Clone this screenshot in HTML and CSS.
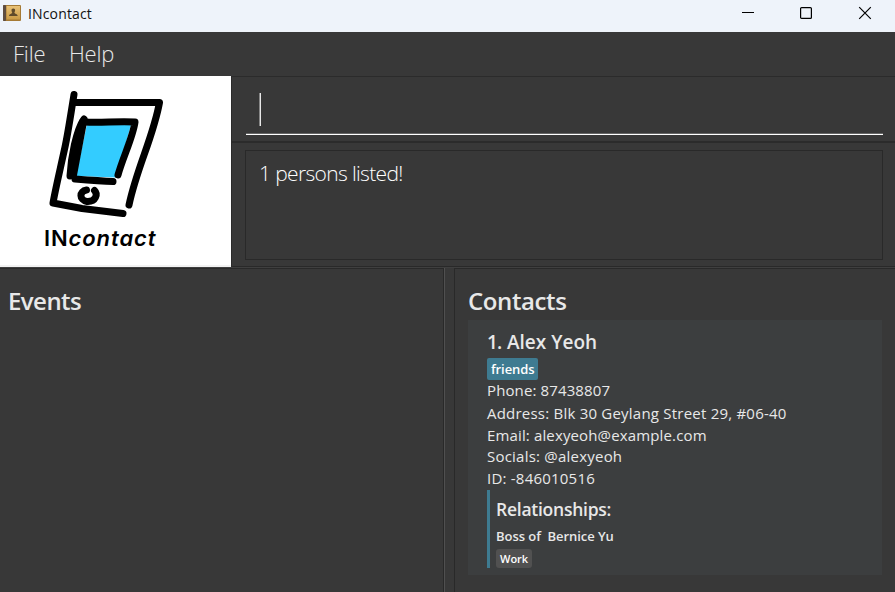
FILE: index.html
```
<!DOCTYPE html>
<html lang="en">
<head>
<meta charset="utf-8">
<title>INcontact</title>
<link rel="stylesheet" href="styles.css">
</head>
<body>
<div class="window">
  <header class="titlebar">
    <svg class="app-icon" width="20" height="18" viewBox="0 0 20 18">
      <defs><linearGradient id="book" x1="0" y1="0" x2="0" y2="1"><stop offset="0" stop-color="#e9c277"/><stop offset="1" stop-color="#c99a45"/></linearGradient></defs>
      <rect x="0" y="1" width="18" height="16" rx="1" fill="#a57a35"/>
      <rect x="3.500" y="2" width="13.500" height="13.500" fill="url(#book)"/>
      <rect x="0" y="1" width="3" height="16" rx="1" fill="#5d4c40"/>
      <path d="M10.300 4.500c1.300 0 1.900.8 1.800 2-.1 1-.6 1.500-.7 2.200 0 1 3.300 1 3.300 3.300H6c0-2.300 3.200-2.300 3.200-3.300-.1-.7-.6-1.200-.7-2.200-.1-1.200.5-2 1.800-2z" fill="#5f4a2a"/>
    </svg>
    <span class="app-title">INcontact</span>
    <div class="controls">
      <svg width="14" height="14" viewBox="0 0 14 14"><path d="M1 6.500h12" stroke="#000"/></svg>
      <svg width="14" height="14" viewBox="0 0 14 14"><rect x="1.600" y="1.600" width="10.800" height="10.800" rx="1" fill="none" stroke="#000" stroke-width="1.200"/></svg>
      <svg width="14" height="14" viewBox="0 0 14 14"><path d="M1.200 1.200l11.600 11.600M12.800 1.200L1.200 12.800" stroke="#000" stroke-width="1.200"/></svg>
    </div>
  </header>
  <nav class="menubar"><span class="m-file">File</span><span class="m-help">Help</span></nav>
  <section class="top">
    <div class="logo">
      <svg width="130" height="135" viewBox="0 0 130 135" fill="none" stroke="#000" stroke-width="7" stroke-linecap="round" stroke-linejoin="round">
        <path d="M47 39C57 42 71 37 91 40L76 92.500 36 91z" fill="#33ccff" stroke="none"/>
        <path d="M34 9.500C30 34 28 48 25 62C20 85 15 106 13 118L42 123.500L83 128.500"/>
        <path d="M35 17.500H119.500C113 53 97 82 89 120"/>
        <path d="M45 37C61 38 77 36 95 37C93 52 83 72 78 90"/>
        <path d="M44 34C36 45 31 73 30 91"/>
        <path d="M43 37L33 90" stroke-width="8"/>
        <path d="M35 94C48 95 61 96 73 96.500"/>
        <path d="M46.500 105C39 106 39 115 47 116.500C56 117 58 109 54.500 105.500" stroke-width="7"/>
      </svg>
      <div class="wordmark">IN<i>contact</i></div>
    </div>
    <div class="console">
      <div class="command"><div class="field"><span class="caret"></span></div></div>
      <div class="result-wrap"><div class="result">1 persons listed!</div></div>
    </div>
  </section>
  <main class="split">
    <section class="events"><h2 class="h-events">Events</h2></section>
    <div class="divider"></div>
    <section class="contacts">
      <h2 class="h-contacts">Contacts</h2>
      <article class="card">
        <h3 class="name"><span class="num">1.</span><span>Alex Yeoh</span></h3>
        <span class="tag">friends</span>
        <p class="r1">Phone: 87438807</p>
        <p class="r2">Address: Blk 30 Geylang Street 29, #06-40</p>
        <p class="r3">Email: alexyeoh@example.com</p>
        <p class="r4">Socials: @alexyeoh</p>
        <p class="r5">ID: -846010516</p>
        <div class="relations">
          <h4>Relationships:</h4>
          <div class="relation">Boss of&nbsp; Bernice Yu</div>
          <span class="work">Work</span>
        </div>
      </article>
    </section>
  </main>
</div>
</body>
</html>
```
FILE: styles.css
```
* { box-sizing: border-box; }
body { margin: 0; font-family: "Open Sans", "Noto Sans", sans-serif; color: #e8e8e8; }
h2, h3, h4, p { margin: 0; white-space: nowrap; }
.window { width: 895px; height: 592px; background: #383838; overflow: hidden; display: flex; flex-direction: column; }
.titlebar { height: 32px; background: #eef3fa; color: #111; display: flex; align-items: flex-start; padding-left: 3px; flex: none; }
.app-icon { margin-top: 4px; width: 20px; }
.app-title { font-size: 14px; line-height: 20px; margin: 4px 0 0 5px; letter-spacing: .15px; }
.controls { margin: 6px 23px 0 auto; display: flex; gap: 45px; }
.controls svg { display: block; }
.controls svg:first-child { margin-right: -1px; }
.menubar { height: 44px; display: flex; gap: 23px; padding-left: 13px; line-height: 42px; font-size: 22px; font-weight: 300; letter-spacing: -.2px; flex: none; }
.m-file { width: 33px; }
.top { height: 191px; display: flex; flex: none; }
.logo { width: 231px; background: #fff; border-bottom: 2px solid #f2f2f2; padding: 9px 0 0 40px; color: #000; }
.logo svg { display: block; }
.wordmark { font: 600 22px/28px Inter, "Liberation Sans", sans-serif; letter-spacing: .9px; margin: 4px 0 0 4px; white-space: nowrap; }
.console { flex: 1; display: flex; flex-direction: column; border-left: 1px solid #2b2b2b; }
.command { height: 68px; border-top: 1px solid #2b2b2b; border-bottom: 2px solid #2b2b2b; padding: 16px 12px 0 14px; }
.field { height: 42px; border-bottom: 1px solid #fff; box-shadow: inset 0 -1px #666; padding-left: 13px; }
.caret { display: block; width: 2px; height: 33px; background: #e8e8e8; border-left: 1px solid #888; }
.result-wrap { flex: 1; padding: 7px 12px 6px 13px; border-bottom: 1px solid #292929; }
.result { height: 110px; border: 1px solid #292929; padding: 7px 0 0 13px; font-size: 21px; line-height: 30px; font-weight: 300; letter-spacing: -.65px; color: #fff; }
.split { flex: 1; display: flex; border-top: 1px solid #3f3f3f; }
.events { width: 444px; border-top: 1px solid #292929; border-right: 1px solid #292929; padding: 15px 0 0 8px; }
.divider { width: 10px; border-left: 1px solid #505050; }
.contacts { flex: 1; border-top: 1px solid #292929; border-left: 1px solid #292929; padding: 15px 13px 0 13px; }
h2 { font-size: 24px; line-height: 34px; font-weight: 600; letter-spacing: -.4px; }
.h-events { letter-spacing: -.55px; }
.card { height: 255px; margin-top: 2px; background: #3c3e3f; padding: 7px 0 0 19px; }
.name { font-size: 19px; line-height: 30px; font-weight: 600; display: flex; }
.num { width: 20px; letter-spacing: -.8px; }
.tag { display: block; width: 51px; height: 22px; border-radius: 2px; background: #3e7b91; color: #fff; font-size: 13px; line-height: 22px; font-weight: 600; letter-spacing: -.1px; padding-left: 4px; margin-top: 1px; }
.card p { font-size: 15px; line-height: 22px; height: 22px; letter-spacing: .22px; }
.card .r1 { line-height: 20px; letter-spacing: .12px; }
.card .r3 { letter-spacing: .14px; }
.card .r4, .card .r5 { line-height: 20px; }
.relations { width: 300px; height: 78px; border-left: 3px solid #3e7b91; padding: 5px 0 0 6px; }
h4 { font-size: 17.5px; line-height: 28px; font-weight: 600; letter-spacing: -.25px; }
.relation { font-size: 13px; line-height: 26px; height: 25px; font-weight: 600; letter-spacing: -.05px; white-space: nowrap; }
.work { display: block; margin-top: 1px; width: 36px; height: 19px; border-radius: 3px; background: #515151; color: #fff; font-size: 11px; line-height: 20px; font-weight: 600; padding-left: 4px; }
```
